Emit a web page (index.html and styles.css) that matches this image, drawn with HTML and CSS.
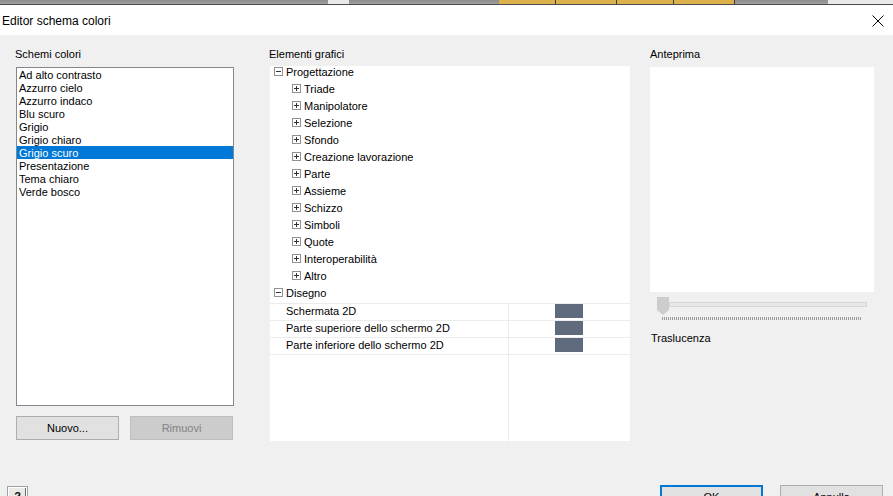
FILE: index.html
```html
<!DOCTYPE html>
<html lang="it">
<head>
    <meta charset="utf-8">
    <title>Editor schema colori</title>
    <link rel="stylesheet" href="styles.css">
</head>
<body>

    <div class="app-strip">
        <span class="strip-seg strip-gray" style="width:328px"></span>
        <span class="strip-seg strip-light" style="width:21px"></span>
        <span class="strip-seg strip-gray" style="width:150px"></span>
        <span class="strip-seg strip-yellow" style="width:57px"></span>
        <span class="strip-seg strip-yellow" style="width:61px"></span>
        <span class="strip-seg strip-yellow" style="width:57px"></span>
        <span class="strip-seg strip-yellow" style="width:61px"></span>
        <span class="strip-seg strip-gray" style="width:93px"></span>
        <span class="strip-seg strip-light strip-fill"></span>
    </div>

    <div class="dlg-titlebar">
        <span class="dlg-title">Editor schema colori</span>
        <svg class="dlg-close" width="12" height="12" viewBox="0 0 12 12">
            <path d="M0.5 0.5 L11.5 11.5 M11.5 0.5 L0.5 11.5" stroke="#000" stroke-width="1" fill="none"/>
        </svg>
    </div>

    <div class="dlg-body">
        <div class="dlg-columns">

            <!-- schemi -->
            <div class="col col-schemes">
                <div class="col-label">Schemi colori</div>
                <ul class="scheme-list">
                    <li>Ad alto contrasto</li>
                    <li>Azzurro cielo</li>
                    <li>Azzurro indaco</li>
                    <li>Blu scuro</li>
                    <li>Grigio</li>
                    <li>Grigio chiaro</li>
                    <li class="selected">Grigio scuro</li>
                    <li>Presentazione</li>
                    <li>Tema chiaro</li>
                    <li>Verde bosco</li>
                </ul>
                <div class="scheme-buttons">
                    <button class="btn">Nuovo...</button>
                    <button class="btn btn-disabled">Rimuovi</button>
                </div>
            </div>

            <!-- elementi -->
            <div class="col col-elements">
                <div class="col-label">Elementi grafici</div>
                <div class="tree-panel">
                    <ul class="tree">
                        <li class="tree-node"><span class="tw tw-minus"></span>Progettazione</li>
                        <li class="tree-node tree-child"><span class="tw tw-plus"></span>Triade</li>
                        <li class="tree-node tree-child"><span class="tw tw-plus"></span>Manipolatore</li>
                        <li class="tree-node tree-child"><span class="tw tw-plus"></span>Selezione</li>
                        <li class="tree-node tree-child"><span class="tw tw-plus"></span>Sfondo</li>
                        <li class="tree-node tree-child"><span class="tw tw-plus"></span>Creazione lavorazione</li>
                        <li class="tree-node tree-child"><span class="tw tw-plus"></span>Parte</li>
                        <li class="tree-node tree-child"><span class="tw tw-plus"></span>Assieme</li>
                        <li class="tree-node tree-child"><span class="tw tw-plus"></span>Schizzo</li>
                        <li class="tree-node tree-child"><span class="tw tw-plus"></span>Simboli</li>
                        <li class="tree-node tree-child"><span class="tw tw-plus"></span>Quote</li>
                        <li class="tree-node tree-child"><span class="tw tw-plus"></span>Interoperabilità</li>
                        <li class="tree-node tree-child"><span class="tw tw-plus"></span>Altro</li>
                        <li class="tree-node"><span class="tw tw-minus"></span>Disegno</li>
                    </ul>
                    <div class="prop-grid">
                        <div class="prop-row">
                            <div class="prop-name">Schermata 2D</div>
                            <div class="prop-value"><span class="swatch"></span></div>
                        </div>
                        <div class="prop-row">
                            <div class="prop-name">Parte superiore dello schermo 2D</div>
                            <div class="prop-value"><span class="swatch"></span></div>
                        </div>
                        <div class="prop-row">
                            <div class="prop-name">Parte inferiore dello schermo 2D</div>
                            <div class="prop-value"><span class="swatch"></span></div>
                        </div>
                        <div class="prop-row prop-empty">
                            <div class="prop-name"></div>
                            <div class="prop-value"></div>
                        </div>
                    </div>
                </div>
            </div>

            <!-- anteprima -->
            <div class="col col-preview">
                <div class="col-label">Anteprima</div>
                <div class="preview-box"></div>
                <div class="slider">
                    <div class="slider-track"></div>
                    <div class="slider-thumb"></div>
                    <div class="slider-ticks"></div>
                </div>
                <div class="slider-label">Traslucenza</div>
            </div>

        </div>

        <div class="dlg-footer">
            <button class="btn-help">?</button>
            <div class="footer-buttons">
                <button class="btn btn-default">OK</button>
                <button class="btn">Annulla</button>
            </div>
        </div>
    </div>

</body>
</html>
```

FILE: styles.css
```css
html, body {
    margin:0;
    padding:0;
    height:100%;
    overflow:hidden;
}

body {
    font:normal 11px "Liberation Sans",Arial,sans-serif;
    color:#000;
    background:#f0f0f0;
}

ul {
    list-style:none;
    margin:0;
    padding:0;
}

button {
    font:inherit;
    color:inherit;
    margin:0;
    padding:0;
}

/* application strip behind the dialog */
.app-strip {
    display:flex;
    height:4px;
    border-bottom:1px solid #4a4a4a;
    background:#fff;
}

.strip-seg {
    display:block;
    height:4px;
}

.strip-gray {
    background:linear-gradient(#8c8c8c, #a0a0a0);
}

.strip-light {
    background:#e9e9e9;
}

.strip-yellow {
    background:#dcb149;
    box-shadow:inset -1px 0 0 #3c3c3c;
}

.strip-fill {
    flex:1;
}

/* title bar */
.dlg-titlebar {
    display:flex;
    align-items:center;
    justify-content:space-between;
    height:30px;
    background:#fff;
    padding:0 9px 0 2px;
}

.dlg-title {
    font-size:12px;
    padding-top:1px;
}

.dlg-close {
    display:block;
    margin-top:1px;
}

/* body */
.dlg-body {
    padding:12px 0 0 0;
}

.dlg-columns {
    display:grid;
    grid-template-columns:219px 362px 224px;
    column-gap:35px;
    padding-left:15px;
}

.col-label {
    height:15px;
    line-height:15px;
    margin-bottom:5px;
}

.col-preview .col-label {
    margin-left:-16px;
}

/* schemes list */
.scheme-list {
    margin-left:1px;
    height:337px;
    border:1px solid #828790;
    background:#fff;
}

.scheme-list li {
    height:12px;
    line-height:13px;
    padding:1px 0 0 2px;
}

.scheme-list li.selected {
    background:#0078d7;
    color:#fff;
}

.scheme-buttons {
    display:flex;
    gap:11px;
    margin:10px 0 0 1px;
}

.btn {
    display:block;
    width:103px;
    height:24px;
    background:#e1e1e1;
    border:1px solid #adadad;
    text-align:center;
}

.btn-disabled {
    background:#cccccc;
    border-color:#bfbfbf;
    color:#838383;
}

.btn-default {
    border:2px solid #0078d7;
}

/* tree */
.tree-panel {
    margin-left:1px;
    width:360px;
    height:375px;
    margin-top:-1px;
    background:#fff;
    display:flex;
    flex-direction:column;
}

.tree {
    margin-top:-3px;
}

.tree-node {
    display:flex;
    align-items:center;
    height:17px;
    padding-left:4px;
}

.tree-child {
    padding-left:22px;
}

.tw {
    position:relative;
    display:block;
    width:7px;
    height:7px;
    border:1px solid #919191;
    margin-right:3px;
    background:#fff;
}

.tw::before {
    content:"";
    position:absolute;
    left:1px;
    top:3px;
    width:5px;
    height:1px;
    background:#333;
}

.tw-plus::after {
    content:"";
    position:absolute;
    left:3px;
    top:1px;
    width:1px;
    height:5px;
    background:#333;
}

/* property grid under Disegno */
.prop-grid {
    flex:1;
    display:flex;
    flex-direction:column;
    margin-top:2px;
}

.prop-row {
    display:flex;
    height:16px;
    border-top:1px solid #ececec;
}

.prop-empty {
    flex:1;
}

.prop-name {
    width:222px;
    padding-left:16px;
    line-height:15px;
    border-right:1px solid #ececec;
}

.prop-value {
    flex:1;
    display:flex;
    justify-content:center;
    padding-right:2px;
}

.swatch {
    display:block;
    width:28px;
    height:14px;
    background:#5f6b7c;
}

/* preview */
.preview-box {
    width:224px;
    height:225px;
    background:#fff;
    margin-left:-16px;
}

.slider {
    position:relative;
    height:31px;
    margin-left:-16px;
}

.slider-track {
    position:absolute;
    left:19px;
    top:10px;
    width:196px;
    height:3px;
    background:#e7e7e7;
    border:1px solid #d6d6d6;
}

.slider-thumb {
    position:absolute;
    left:7px;
    top:5px;
    width:12px;
    height:13px;
    background:#cdcdcd;
}

.slider-thumb::after {
    content:"";
    position:absolute;
    left:0;
    top:13px;
    border-left:6px solid transparent;
    border-right:6px solid transparent;
    border-top:5px solid #cdcdcd;
}

.slider-ticks {
    position:absolute;
    left:12px;
    top:25px;
    width:199px;
    height:3px;
    background:repeating-linear-gradient(90deg, #9a9a9a 0, #9a9a9a 1px, transparent 1px, transparent 2px);
}

.slider-label {
    margin:9px 0 0 -15px;
}

/* footer */
.dlg-footer {
    display:flex;
    justify-content:space-between;
    align-items:flex-start;
    margin-top:44px;
    padding:0 10px 0 7px;
}

.btn-help {
    width:21px;
    height:20px;
    margin-top:1px;
    background:#e9e9e9;
    border:1px solid #a0a0a0;
    box-shadow:inset 0 0 0 1px #fff, inset -1px -1px 0 1px #6a6a6a;
    font-weight:bold;
    font-size:11px;
}

.footer-buttons {
    display:flex;
    gap:17px;
}
```
